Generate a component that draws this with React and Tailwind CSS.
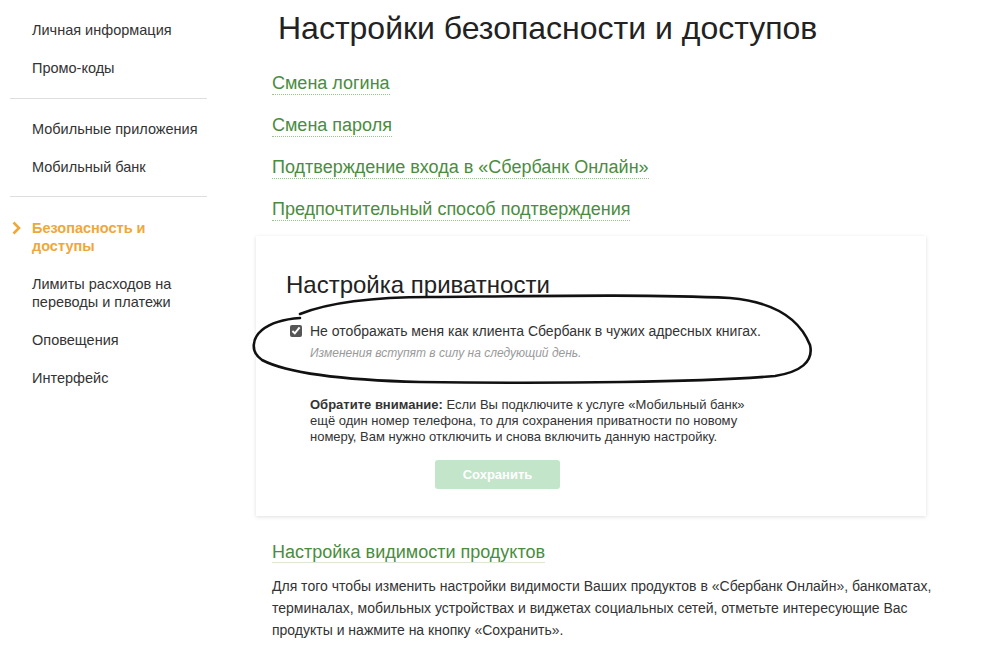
import React from 'react';

const font = { fontFamily: '"Liberation Sans", Arial, sans-serif' };

const NavItem = ({ children, active }) => (
    <div className={`relative pl-[22px] text-[14.5px] leading-[18px] ${active ? 'text-[#f0a73a] font-bold' : 'text-[#333]'}`}>
        {active && (
            <svg className="absolute left-[2px] top-[2px]" width="9" height="14" viewBox="0 0 9 14">
                <polyline points="1.5,1.5 7,7 1.5,12.5" fill="none" stroke="#f0a73a" strokeWidth="2.6" />
            </svg>
        )}
        {children}
    </div>
);

const Divider = () => <div className="h-px bg-[#dedede]" />;

const LinkItem = ({ children }) => (
    <div className="h-[42px] flex items-center">
        <span className="text-[18px] leading-[22px] text-[#4a8c40] border-b border-dotted border-[#9dbf94]">{children}</span>
    </div>
);

export default function App() {
    return (
        <div className="relative w-[1004px] h-[646px] bg-white overflow-hidden" style={font}>
            <div className="flex">
                {/* Sidebar */}
                <div className="w-[197px] ml-[10px] pt-[21px] flex flex-col">
                    <NavItem>Личная информация</NavItem>
                    <div className="mt-[20px]"><NavItem>Промо-коды</NavItem></div>
                    <div className="mt-[21px]"><Divider /></div>
                    <div className="mt-[21px]"><NavItem>Мобильные приложения</NavItem></div>
                    <div className="mt-[20px]"><NavItem>Мобильный банк</NavItem></div>
                    <div className="mt-[20px]"><Divider /></div>
                    <div className="mt-[22px]"><NavItem active>Безопасность и<br />доступы</NavItem></div>
                    <div className="mt-[20px]"><NavItem>Лимиты расходов на<br />переводы и платежи</NavItem></div>
                    <div className="mt-[20px]"><NavItem>Оповещения</NavItem></div>
                    <div className="mt-[20px]"><NavItem>Интерфейс</NavItem></div>
                </div>

                {/* Main */}
                <div className="ml-[49px] w-[670px] flex flex-col">
                    <h1 className="pl-[22px] pt-[9px] text-[32px] leading-[38px] text-[#222]">Настройки безопасности и доступов</h1>
                    <div className="pl-[16px] mt-[15px] flex flex-col">
                        <LinkItem>Смена логина</LinkItem>
                        <LinkItem>Смена пароля</LinkItem>
                        <LinkItem>Подтверждение входа в «Сбербанк Онлайн»</LinkItem>
                        <LinkItem>Предпочтительный способ подтверждения</LinkItem>
                    </div>

                    <div className="mt-[6px] h-[280px] bg-white shadow-[0_1px_4px_rgba(0,0,0,0.13)] pl-[30px] pt-[34px]">
                        <h2 className="text-[24px] leading-[30px] text-[#222]">Настройка приватности</h2>
                        <label className="mt-[22px] flex items-center gap-[8px] pl-[4px]">
                            <input type="checkbox" defaultChecked className="w-[12px] h-[12px] accent-[#555] m-0" />
                            <span className="text-[14px] leading-[18px] text-[#333]">Не отображать меня как клиента Сбербанк в чужих адресных книгах.</span>
                        </label>
                        <div className="mt-[5px] pl-[24px] text-[12px] leading-[16px] italic text-[#9a9a9a]">Изменения вступят в силу на следующий день.</div>
                        <p className="mt-[36px] pl-[24px] w-[478px] text-[13px] leading-[16px] text-[#333]">
                            <b>Обратите внимание:</b> Если Вы подключите к услуге «Мобильный банк» ещё один номер телефона, то для сохранения приватности по новому номеру, Вам нужно отключить и снова включить данную настройку.
                        </p>
                        <button className="mt-[15px] ml-[149px] w-[125px] h-[29px] rounded-[3px] bg-[#c3e5c9] text-white font-bold text-[13px]">Сохранить</button>
                    </div>

                    <div className="pl-[16px] mt-[25px]">
                        <span className="text-[18px] leading-[22px] text-[#4a8c40] border-b border-solid border-[#dbe8d6]">Настройка видимости продуктов</span>
                        <p className="mt-[10px] w-[690px] text-[14px] leading-[22px] text-[#333]">
                            Для того чтобы изменить настройки видимости Ваших продуктов в «Сбербанк Онлайн», банкоматах, терминалах, мобильных устройствах и виджетах социальных сетей, отметьте интересующие Вас продукты и нажмите на кнопку «Сохранить».
                        </p>
                    </div>
                </div>
            </div>

            {/* hand-drawn ellipse mark */}
            <svg className="absolute left-0 top-0 pointer-events-none" width="1004" height="646" viewBox="0 0 1004 646">
                <path
                    d="M300 314 C 330 302, 380 297, 430 297 C 540 296, 650 294, 730 298 C 775 302, 800 320, 810 345 C 814 362, 800 372, 775 376 C 700 382, 560 384, 420 382 C 340 380, 285 372, 262 360 C 250 352, 252 338, 262 330 C 272 322, 285 319, 300 318"
                    fill="none"
                    stroke="#111"
                    strokeWidth="2.6"
                    strokeLinecap="round"
                />
            </svg>
        </div>
    );
}
